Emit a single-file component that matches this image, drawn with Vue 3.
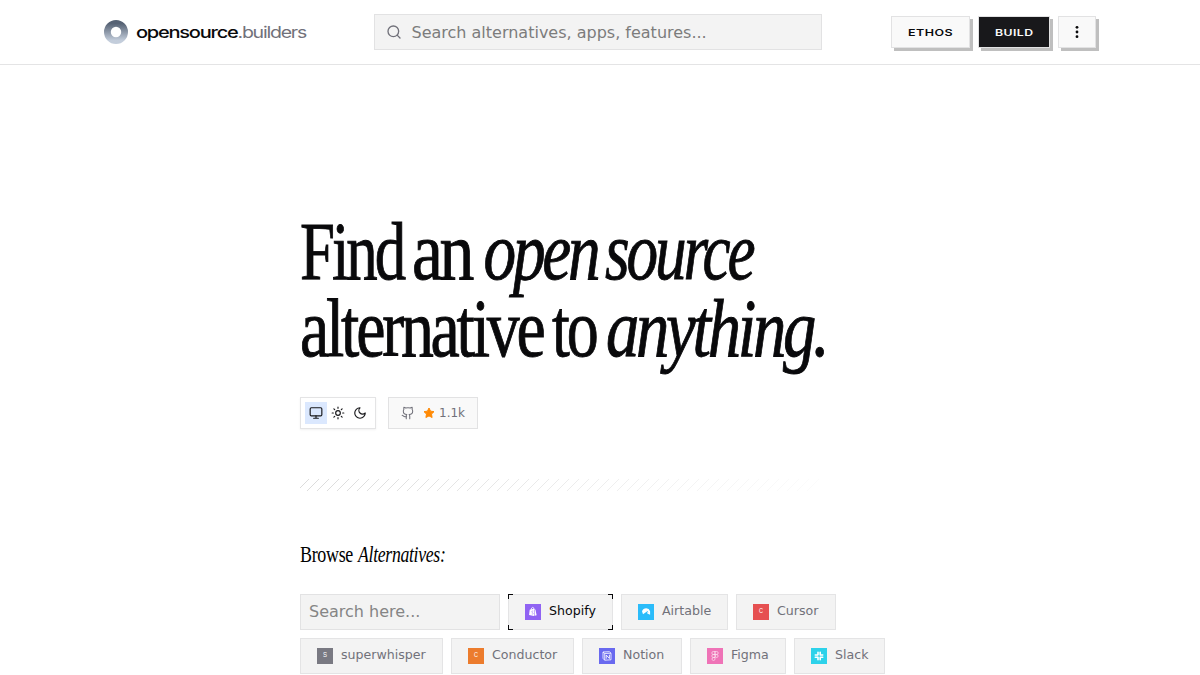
<script setup>
const firstLine = [
  { t: 'Find', x: 0, w: 103 },
  { t: 'an', x: 112, w: 59 },
  { t: 'open', x: 183.500, w: 114, i: true },
  { t: 'source', x: 305, w: 147.500, i: true },
]
const secondLine = [
  { t: 'alternative', x: 0, w: 242.500 },
  { t: 'to', x: 252, w: 43.500 },
  { t: 'anything.', x: 306, w: 220.500, i: true },
]
const apps = [
  { name: 'Shopify', color: '#9063f3', icon: 'shopify', active: true, w: 105 },
  { name: 'Airtable', color: '#2bbcfa', icon: 'airtable', w: 107 },
  { name: 'Cursor', color: '#e65051', letter: 'C', w: 100 },
  { name: 'superwhisper', color: '#797982', letter: 'S', w: 143 },
  { name: 'Conductor', color: '#ec7c2d', letter: 'C', w: 123 },
  { name: 'Notion', color: '#6969ef', icon: 'notion', w: 100 },
  { name: 'Figma', color: '#ef73b7', icon: 'figma', w: 96 },
  { name: 'Slack', color: '#2dd2ea', icon: 'slack', w: 91 },
]
</script>

<template>
  <div class="page">
    <header class="header">
      <div class="brand">
        <svg class="mark" width="24" height="24" viewBox="0 0 24 24">
          <defs>
            <linearGradient id="ring" x1="0" y1="0" x2="0" y2="1">
              <stop offset="0" stop-color="#566274" />
              <stop offset="1" stop-color="#c3cddb" />
            </linearGradient>
          </defs>
          <circle cx="12" cy="12" r="8.6" fill="none" stroke="url(#ring)" stroke-width="6.8" />
        </svg>
        <svg class="wordmark" width="176" height="24">
          <text x="0" y="18" textLength="101.5" lengthAdjust="spacingAndGlyphs" font-weight="500" fill="#09090b">opensource</text>
          <text x="101.500" y="18" textLength="68.500" lengthAdjust="spacingAndGlyphs" fill="#71717a">.builders</text>
        </svg>
      </div>
      <div class="search">
        <svg width="16" height="16" viewBox="0 0 24 24" fill="none" stroke="#71717a" stroke-width="2" stroke-linecap="round"><circle cx="11" cy="11" r="8" /><path d="m21 21-4.3-4.3" /></svg>
        <span>Search alternatives, apps, features...</span>
      </div>
      <nav class="nav">
        <button class="btn ethos"><svg width="45" height="12"><text x="0" y="9.500" textLength="45" lengthAdjust="spacingAndGlyphs">ETHOS</text></svg></button>
        <button class="btn build"><svg width="38" height="12"><text x="0" y="9.500" textLength="38.500" lengthAdjust="spacingAndGlyphs">BUILD</text></svg></button>
        <button class="btn more"><svg width="16" height="16" viewBox="0 0 16 16"><circle cx="8" cy="3.3" r="1.4" /><circle cx="8" cy="8" r="1.4" /><circle cx="8" cy="12.7" r="1.4" /></svg></button>
      </nav>
    </header>

    <main class="main">
      <h1 class="title">
        <svg width="600" height="77" viewBox="0 0 600 77">
          <text v-for="p in firstLine" :key="p.t" :x="p.x" y="63.500" :textLength="p.w" lengthAdjust="spacingAndGlyphs" :class="{ em: p.i }">{{ p.t }}</text>
        </svg>
        <svg width="600" height="77" viewBox="0 0 600 77">
          <text v-for="p in secondLine" :key="p.t" :x="p.x" y="63.500" :textLength="p.w" lengthAdjust="spacingAndGlyphs" :class="{ em: p.i }">{{ p.t }}</text>
        </svg>
      </h1>

      <div class="tools">
        <div class="theme">
          <span class="mode on"><svg width="14" height="14" viewBox="0 0 24 24"><rect x="2" y="3" width="20" height="14" rx="2" /><path d="M8 21h8M12 17v4" /></svg></span>
          <span class="mode"><svg width="14" height="14" viewBox="0 0 24 24"><circle cx="12" cy="12" r="4" /><path d="M12 2v2M12 20v2M4.93 4.93l1.41 1.41M17.66 17.66l1.41 1.41M2 12h2M20 12h2M6.34 17.66l-1.41 1.41M19.07 4.93l-1.41 1.41" /></svg></span>
          <span class="mode"><svg width="14" height="14" viewBox="0 0 24 24"><path d="M12 3a6 6 0 0 0 9 9 9 9 0 1 1-9-9Z" /></svg></span>
        </div>
        <div class="stars">
          <svg class="gh" width="14" height="14" viewBox="0 0 24 24"><path d="M15 22v-4a4.8 4.8 0 0 0-1-3.5c3 0 6-2 6-5.5.08-1.25-.27-2.48-1-3.5.28-1.15.28-2.35 0-3.5 0 0-1 0-3 1.5-2.64-.5-5.36-.5-8 0C6 2 5 2 5 2c-.3 1.15-.3 2.35 0 3.5A5.4 5.4 0 0 0 4 9c0 3.5 3 5.5 6 5.5-.39.49-.68 1.05-.85 1.65S8.93 17.38 9 18v4" /><path d="M9 18c-4.51 2-5-2-7-2" /></svg>
          <svg class="star" width="12" height="12" viewBox="0 0 24 24"><path d="m12 2 3.1 6.3 6.9 1-5 4.9 1.2 6.8-6.2-3.2L5.800 21 7 14.200 2 9.300l6.900-1z" /></svg>
          <span>1.1k</span>
        </div>
      </div>

      <svg class="hatch" width="520" height="12" viewBox="0 0 520 12">
        <defs>
          <linearGradient id="fade" gradientUnits="userSpaceOnUse" x1="0" y1="0" x2="580" y2="0">
            <stop offset="0" stop-color="#d2d2d2" />
            <stop offset="1" stop-color="#d2d2d2" stop-opacity="0" />
          </linearGradient>
        </defs>
        <path v-for="n in 52" :key="n" :d="`M${n * 10 - 1} 0l-12 12`" stroke="url(#fade)" stroke-width=".8" />
      </svg>

      <h2 class="browse">
        <svg width="200" height="28">
          <text x="0" y="20" textLength="53" lengthAdjust="spacingAndGlyphs">Browse</text>
          <text class="em" x="58" y="20" textLength="87.500" lengthAdjust="spacingAndGlyphs">Alternatives:</text>
        </svg>
      </h2>

      <div class="chips">
        <div class="field">Search here...</div>
        <div v-for="a in apps" :key="a.name" class="chip" :class="{ active: a.active }" :style="{ width: a.w + 'px' }">
          <svg class="tile" width="16" height="16" viewBox="0 0 16 16">
            <rect width="16" height="16" :fill="a.color" />
            <text v-if="a.letter" x="6.100" y="9" textLength="4" lengthAdjust="spacingAndGlyphs" class="letter">{{ a.letter }}</text>
            <g v-else-if="a.icon === 'shopify'">
              <path d="M4.700 5.800 9 4.800l1.500 1 1.100 5.400-2.700.8-4.800-1z" fill="#fff" />
              <path d="M6 6q.4-2.600 1.700-2.600T9 5.300" fill="none" stroke="#fff" stroke-width=".8" />
              <path d="M8.300 7q-1.600-.3-1.500.7t1 1.200-.2 1.300l-.8-.2M9.500 5.500v6.500" fill="none" :stroke="a.color" stroke-width=".5" />
            </g>
            <g v-else-if="a.icon === 'airtable'" fill="#fff">
              <path d="M4 7.300Q5 4.300 8.300 4.200q2.900.2 3.800 3v3.600L9.300 9.400V7.300L5 10.200z" />
              <path d="m8.900 7.100 1.300 1.100" :stroke="a.color" stroke-width=".7" />
            </g>
            <g v-else-if="a.icon === 'notion'" fill="none" stroke="#fff" stroke-width=".8">
              <path d="m4 4 6.300-.3L12 5.200v6.600l-6.300.4L4 10.300zM4 4l1.700 1.500L12 5.200M5.700 5.500v6.700" />
              <path d="M7.200 10.700V7l3.200 3.500V6.700" stroke-width=".9" />
            </g>
            <g v-else-if="a.icon === 'figma'" fill="none" stroke="#fff" stroke-width=".65" opacity=".85">
              <path d="M8 3.500H6.300a1.500 1.500 0 0 0 0 3H8zM8 3.500h1.700a1.500 1.500 0 0 1 0 3H8zM8 6.500H6.300a1.500 1.500 0 0 0 0 3H8zM8 9.500H6.300A1.500 1.500 0 1 0 8 11z" />
              <circle cx="9.600" cy="8" r="1.500" />
            </g>
            <g v-else stroke="#fff" stroke-width="1.600" stroke-linecap="round" fill="none">
              <path d="M7 4.300v2.500M4.300 7h2.500M9.200 4.300v2.500M11.700 7H9.200M7 11.700V9.200M4.300 9.200h2.500M9.200 11.700V9.200M11.700 9.200H9.200" />
            </g>
          </svg>
          <span class="name">{{ a.name }}</span>
          <template v-if="a.active"><i class="c tl" /><i class="c tr" /><i class="c bl" /><i class="c br" /></template>
        </div>
      </div>
    </main>
  </div>
</template>

<style>
html, body { margin: 0; overflow: hidden; background: #fff; }
</style>

<style scoped>
* { box-sizing: border-box; }
svg { display: block; flex: none; overflow: visible; }
.page { height: 675px; overflow: hidden; font-family: "DejaVu Sans", sans-serif; color: #09090b; background: #fff; }
.header { height: 65px; padding: 0 104px; display: flex; align-items: center; border-bottom: 1px solid #e4e4e5; }
.brand { width: 270px; flex: none; display: flex; align-items: center; gap: 8px; }
.wordmark { font: 16px Inter, sans-serif; letter-spacing: -1px; }
.search { width: 448px; flex: none; height: 36px; border: 1px solid #e2e2e3; background: #f3f3f3; display: flex; align-items: center; padding-left: 11px; gap: 9.500px; font-size: 16px; color: #7c7c7c; }
.nav { margin-left: 69px; flex: none; display: flex; gap: 8px; }
.btn { height: 32px; padding: 0; border: 1px solid #e2e2e3; border-radius: 0; background: #f9f9f9; box-shadow: 3px 3px 0 #bfbfbf; display: flex; align-items: center; justify-content: center; font: 600 8.500px Inter, sans-serif; letter-spacing: .3px; color: #09090b; }
.btn svg { fill: currentColor; }
.ethos { width: 79px; }
.build { width: 72px; background: #18181b; color: #fafafa; }
.more { width: 38px; }
.main { width: 600px; margin: 150px auto 0; }
.title { margin: 0; font: 400 81.500px "Liberation Serif", serif; letter-spacing: -4px; }
.title text { fill: #09090b; stroke: #09090b; stroke-width: .9px; }
.em { font-style: italic; }
.tools { margin-top: 28px; display: flex; gap: 12px; }
.theme { width: 76px; height: 32px; padding: 4px; border: 1px solid #e4e4e5; display: flex; box-shadow: 0 1px 2px rgba(0, 0, 0, .06); }
.mode { width: 22px; height: 22px; display: grid; place-items: center; }
.mode.on { background: #dbe8fe; }
.mode svg { fill: none; stroke: #18181b; stroke-width: 2; stroke-linecap: round; stroke-linejoin: round; }
.stars { width: 90px; height: 32px; border: 1px solid #e2e2e3; background: #f9f9f9; display: flex; align-items: center; padding-left: 12px; font-size: 12px; color: #71717a; }
.gh { fill: none; stroke: #71717a; stroke-width: 1.800; stroke-linecap: round; stroke-linejoin: round; }
.star { margin: 0 4px 0 8px; fill: #ff8904; stroke: #ff8904; stroke-width: 2; stroke-linejoin: round; }
.hatch { margin-top: 50px; overflow: hidden; }
.browse { margin: 51px 0 0; height: 28px; font: 400 22.500px "Liberation Serif", serif; letter-spacing: -.4px; }
.chips { margin-top: 24px; display: flex; flex-wrap: wrap; gap: 8px; }
.field { width: 200px; height: 36px; border: 1px solid #e2e2e3; background: #f3f3f3; padding-left: 8px; font-size: 16px; line-height: 33px; color: #858585; }
.chip { position: relative; height: 36px; border: 1px solid #e4e4e5; background: #f3f3f3; padding-left: 16px; display: flex; align-items: center; gap: 8px; font-size: 12.600px; color: #71717a; }
.name { margin-top: -3px; white-space: nowrap; }
.active { color: #09090b; }
.letter { font: 8px "Liberation Sans", sans-serif; fill: #fff; }
.c { position: absolute; width: 5px; height: 5px; border: 0 solid #09090b; }
.tl { left: -1px; top: -1px; border-width: 1px 0 0 1px; }
.tr { right: -1px; top: -1px; border-width: 1px 1px 0 0; }
.bl { left: -1px; bottom: -1px; border-width: 0 0 1px 1px; }
.br { right: -1px; bottom: -1px; border-width: 0 1px 1px 0; }
</style>
